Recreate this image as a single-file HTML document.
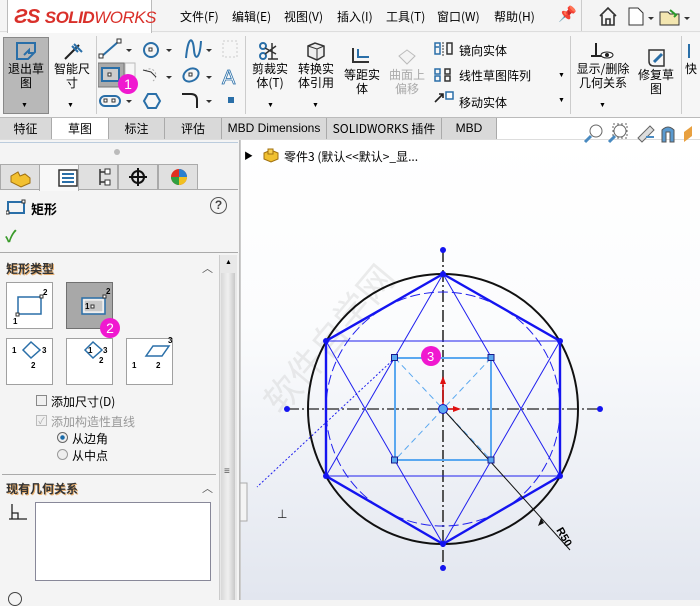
<!DOCTYPE html>
<html><head><meta charset="utf-8"><style>
*{margin:0;padding:0;box-sizing:border-box}
body{width:700px;height:600px;overflow:hidden;position:relative;background:#f4f4f4;font-family:"Liberation Sans","Noto Sans CJK SC",sans-serif;font-size:12px;color:#000}
.a{position:absolute;white-space:nowrap}
.cn{font-family:"Noto Sans CJK SC",sans-serif}
.tab{position:absolute;top:118px;height:21px;border-right:1px solid #aaa;background:#d9d9d9;text-align:center;line-height:21px;font-size:12px}
.btn{position:absolute;width:47px;height:47px;border:1px solid #a0a0a0;background:#fff}
.ptab{position:absolute;top:164px;width:40px;height:26px;border:1px solid #aaa;background:#e0e0e0}
.lbl{font-size:12px;line-height:14px;text-align:center}
</style></head><body>
<!-- menu bar -->
<div class="a" style="left:0;top:0;width:700px;height:32px;background:#f4f4f4;border-bottom:1px solid #ddd"></div>
<div class="a" style="left:7px;top:0;width:145px;height:34px;background:#fff;border:1px solid #bbb;border-top:none"></div>
<div class="a" style="left:14px;top:6px;font-size:20px;font-weight:bold;color:#d9302a;font-style:italic;letter-spacing:-0.5px">ƧS <span style="font-size:17px">SOLID</span><span style="font-size:17px;font-weight:normal">WORKS</span></div>
<div class="a cn" style="left:180px;top:8px;font-size:12px">文件(F)</div>
<div class="a cn" style="left:232px;top:8px;font-size:12px">编辑(E)</div>
<div class="a cn" style="left:284px;top:8px;font-size:12px">视图(V)</div>
<div class="a cn" style="left:337px;top:8px;font-size:12px">插入(I)</div>
<div class="a cn" style="left:386px;top:8px;font-size:12px">工具(T)</div>
<div class="a cn" style="left:437px;top:8px;font-size:12px">窗口(W)</div>
<div class="a cn" style="left:494px;top:8px;font-size:12px">帮助(H)</div>
<div class="a" style="left:558px;top:5px;font-size:15px;color:#2a7fc0">📌</div>
<div class="a" style="left:581px;top:0;width:1px;height:31px;background:#ccc"></div>
<svg class="a" style="left:596px;top:4px" width="104" height="24"><path d="M4 12 L12 4 L20 12 M6 11 V21 H18 V11 M10 21 V15 H14 V21" fill="none" stroke="#333" stroke-width="1.6"/><path d="M33 4 H42 L47 9 V21 H33Z" fill="#fff" stroke="#333"/><path d="M52 13 l3 3 l3-3z" fill="#333"/><path d="M64 8 H72 L74 10 H83 V21 H64Z" fill="#f3e6b0" stroke="#333"/><path d="M74 6 l6 5 l-2 2" fill="none" stroke="#2a9a2a" stroke-width="2"/><path d="M88 13 l3 3 l3-3z" fill="#333"/></svg>
<!-- ribbon -->
<div class="a" style="left:0;top:33px;width:700px;height:85px;background:#f6f6f6;border-bottom:1px solid #bbb"></div>
<div class="a" style="left:3px;top:37px;width:46px;height:77px;background:#b8b8b8;border:1px solid #888"></div>
<svg class="a" style="left:14px;top:40px" width="26" height="22"><path d="M3 3 H21 V12 L14 19 H3Z" fill="none" stroke="#2a6fa8" stroke-width="2"/><path d="M10 15 l5 -5 v3 h5" fill="none" stroke="#2a6fa8" stroke-width="2"/></svg>
<div class="a cn lbl" style="left:4px;top:62px;width:44px">退出草<br>图</div>
<div class="a" style="left:21px;top:102px;font-size:7px">▼</div>
<svg class="a" style="left:62px;top:42px" width="22" height="20"><path d="M3 17 L17 3" stroke="#222" stroke-width="2"/><path d="M10 4 l6 6 M12 2 l8 8" stroke="#2a6fa8" stroke-width="2"/></svg>
<div class="a cn lbl" style="left:50px;top:62px;width:44px">智能尺<br>寸</div>
<div class="a" style="left:67px;top:102px;font-size:7px">▼</div>
<div class="a" style="left:96px;top:36px;width:1px;height:78px;background:#ccc"></div>
<!-- sketch tools -->
<svg class="a" style="left:98px;top:36px" width="150" height="80">
<path d="M4 20 L20 6" stroke="#2a6fa8" stroke-width="2"/><rect x="1" y="18" width="4" height="4" fill="#fff" stroke="#333"/><rect x="19" y="3" width="4" height="4" fill="#fff" stroke="#333"/><path d="M28 13 l3 3 l3-3z" fill="#333"/>
<circle cx="53" cy="14" r="7" fill="none" stroke="#2a6fa8" stroke-width="2"/><rect x="51" y="12" width="3" height="3" fill="#fff" stroke="#333"/><path d="M68 13 l3 3 l3-3z" fill="#333"/>
<path d="M88 22 C90 0 95 0 96 14 C97 26 102 22 103 5" fill="none" stroke="#2a6fa8" stroke-width="2"/><path d="M108 13 l3 3 l3-3z" fill="#333"/>
<rect x="125" y="5" width="14" height="16" fill="none" stroke="#ccc" stroke-dasharray="2 2"/>
<rect x="0" y="27" width="26" height="24" fill="#aaa" stroke="#777"/><rect x="27" y="27" width="10" height="24" fill="#f6f6f6" stroke="#bbb"/><rect x="4" y="32" width="17" height="13" fill="#ccc" stroke="#2a6fa8" stroke-width="2"/><rect x="10" y="37" width="3" height="3" fill="#fff" stroke="#333"/>
<path d="M47 35 C55 28 62 40 55 45" fill="none" stroke="#aaa" stroke-dasharray="2 2"/><path d="M45 34 l8 2 l5 5" fill="none" stroke="#333"/><path d="M68 40 l3 3 l3-3z" fill="#333"/>
<ellipse cx="93" cy="39" rx="8" ry="6" transform="rotate(-30 93 39)" fill="none" stroke="#2a6fa8" stroke-width="2"/><rect x="91" y="37" width="3" height="3" fill="#fff" stroke="#333"/><path d="M108 40 l3 3 l3-3z" fill="#333"/>
<text x="124" y="48" font-size="20" fill="#fff" stroke="#2a6fa8" stroke-width="0.8" font-family="Liberation Sans">A</text>
<rect x="2" y="60" width="20" height="10" rx="5" fill="none" stroke="#2a6fa8" stroke-width="2"/><rect x="6" y="63" width="3" height="3" fill="#fff" stroke="#333"/><rect x="14" y="63" width="3" height="3" fill="#fff" stroke="#333"/><path d="M28 64 l3 3 l3-3z" fill="#333"/>
<path d="M46 65 l4-7 h8 l4 7 l-4 7 h-8z" fill="none" stroke="#2a6fa8" stroke-width="2"/>
<path d="M84 58 H93 Q99 58 99 64 V72" fill="none" stroke="#222" stroke-width="2"/><path d="M108 64 l3 3 l3-3z" fill="#333"/>
<rect x="130" y="61" width="6" height="6" fill="#2a6fa8"/>
</svg>
<div class="a" style="left:118px;top:74px;width:20px;height:20px;border-radius:50%;background:#f018d0;color:#fff;text-align:center;line-height:20px;font-size:14px">1</div>
<div class="a" style="left:245px;top:36px;width:1px;height:78px;background:#ccc"></div>
<svg class="a" style="left:258px;top:41px" width="24" height="20"><circle cx="5" cy="5" r="3" fill="none" stroke="#2a6fa8" stroke-width="2"/><circle cx="5" cy="15" r="3" fill="none" stroke="#2a6fa8" stroke-width="2"/><path d="M7 7 L18 13 M7 13 L18 5 M14 2 V18 M10 18 H20" stroke="#333" stroke-width="1.5"/></svg>
<div class="a cn lbl" style="left:250px;top:62px;width:40px">剪裁实<br>体(T)</div>
<div class="a" style="left:267px;top:102px;font-size:7px">▼</div>
<svg class="a" style="left:305px;top:41px" width="22" height="20"><path d="M3 5 L10 2 L19 5 V15 L12 19 L3 15Z" fill="#eee" stroke="#333" stroke-width="1.5"/><path d="M3 5 L12 8 L19 5 M12 8 V19" stroke="#333" fill="none"/></svg>
<div class="a cn lbl" style="left:296px;top:62px;width:40px">转换实<br>体引用</div>
<div class="a" style="left:312px;top:102px;font-size:7px">▼</div>
<svg class="a" style="left:351px;top:46px" width="22" height="20"><path d="M2 2 V16 H18" fill="none" stroke="#333" stroke-width="2"/><path d="M7 3 V11 H18" fill="none" stroke="#2a6fa8" stroke-width="2"/></svg>
<div class="a cn lbl" style="left:342px;top:68px;width:40px">等距实<br>体</div>
<svg class="a" style="left:395px;top:48px" width="22" height="18"><path d="M4 8 L12 2 L20 8 L12 16Z" fill="#f3f3f3" stroke="#bbb"/></svg>
<div class="a cn lbl" style="left:387px;top:68px;width:40px;color:#aaa">曲面上<br>偏移</div>
<svg class="a" style="left:433px;top:40px" width="22" height="68"><path d="M2 3 H7 V14 H2Z M2 7 H6" fill="none" stroke="#2a6fa8" stroke-width="1.5"/><path d="M14 3 H19 V14 H14Z" fill="none" stroke="#333" stroke-width="1.5"/><path d="M10 2 V16" stroke="#333" stroke-dasharray="2 1"/>
<path d="M2 29 H7 V34 H2Z M2 36 H7 V41 H2Z" fill="none" stroke="#2a6fa8" stroke-width="1.5"/><path d="M12 29 H17 V34 H12Z M12 36 H17 V41 H12Z" fill="none" stroke="#333" stroke-width="1.5"/>
<path d="M2 62 L10 54 M6 54 H10 V58" stroke="#222" stroke-width="1.6" fill="none"/><rect x="13" y="52" width="7" height="7" fill="#fff" stroke="#2a6fa8" stroke-width="1.5"/></svg>
<div class="a cn" style="left:459px;top:42px;font-size:12px">镜向实体</div>
<div class="a cn" style="left:459px;top:67px;font-size:12px">线性草图阵列</div>
<div class="a cn" style="left:459px;top:94px;font-size:12px">移动实体</div>
<div class="a" style="left:558px;top:72px;font-size:7px">▼</div>
<div class="a" style="left:558px;top:97px;font-size:7px">▼</div>
<div class="a" style="left:570px;top:36px;width:1px;height:78px;background:#ccc"></div>
<svg class="a" style="left:590px;top:41px" width="26" height="20"><path d="M6 2 V15 M1 15 H13" stroke="#222" stroke-width="2"/><ellipse cx="17" cy="14" rx="6" ry="3" fill="#fff" stroke="#222"/><circle cx="17" cy="14" r="2" fill="#222"/></svg>
<div class="a cn lbl" style="left:575px;top:62px;width:56px">显示/删除<br>几何关系</div>
<div class="a" style="left:599px;top:102px;font-size:7px">▼</div>
<svg class="a" style="left:646px;top:48px" width="22" height="20"><path d="M3 2 H18 V18 H8 Q3 18 3 13Z" fill="none" stroke="#333" stroke-width="1.5"/><path d="M8 14 L16 6" stroke="#2a6fa8" stroke-width="3"/></svg>
<div class="a cn lbl" style="left:636px;top:68px;width:40px">修复草<br>图</div>
<div class="a" style="left:681px;top:36px;width:1px;height:78px;background:#ccc"></div>
<div class="a" style="left:688px;top:44px;width:2px;height:14px;background:#2a6fa8"></div>
<div class="a cn lbl" style="left:685px;top:62px">快</div>
<!-- tabs -->
<div class="a" style="left:0;top:118px;width:700px;height:22px;background:#fff;border-bottom:1px solid #ddd"></div>
<div class="tab cn" style="left:0;width:52px">特征</div>
<div class="tab cn" style="left:52px;width:57px;background:#fff">草图</div>
<div class="tab cn" style="left:109px;width:56px">标注</div>
<div class="tab cn" style="left:165px;width:57px">评估</div>
<div class="tab" style="left:222px;width:105px">MBD Dimensions</div>
<div class="tab cn" style="left:327px;width:115px">SOLIDWORKS 插件</div>
<div class="tab" style="left:442px;width:55px">MBD</div>
<!-- canvas -->
<div class="a" style="left:240px;top:140px;width:460px;height:460px;background:linear-gradient(#fff 0%,#fbfcfd 40%,#e2e6ef 100%);border-left:1px solid #ccc"></div>
<svg class="a" style="left:580px;top:122px" width="120" height="24"><circle cx="16" cy="9" r="6" fill="#fff" stroke="#666"/><path d="M11 14 L5 20" stroke="#4a8ac0" stroke-width="3"/><circle cx="40" cy="9" r="6" fill="#fff" stroke="#666"/><rect x="33" y="2" width="14" height="14" fill="none" stroke="#666" stroke-dasharray="2 2"/><path d="M35 14 L29 20" stroke="#4a8ac0" stroke-width="3"/><path d="M58 16 L70 4 L74 8 L62 20Z" fill="#ddd" stroke="#666"/><path d="M66 15 H74" stroke="#4a8ac0" stroke-width="2"/><path d="M82 8 Q88 2 94 8 V20 H90 V10 H86 V20 H82Z" fill="#5a9ad0" stroke="#555"/><path d="M104 10 L112 4 V14 L104 20Z" fill="#e8a040"/></svg>
<div class="a" style="left:244px;top:149px;font-size:9px">▶</div>
<svg class="a" style="left:262px;top:146px" width="18" height="18"><path d="M2 7 L9 4 L16 7 V13 L9 16 L2 13Z" fill="#f0c030" stroke="#a07010"/><path d="M6 3 H11 V8 H6Z" fill="#f8d050" stroke="#a07010"/></svg>
<div class="a cn" style="left:284px;top:148px;font-size:12px">零件3 (默认&lt;&lt;默认&gt;_显...</div>
<div class="a cn" style="left:250px;font-size:36px;color:rgba(200,200,200,0.35);transform:rotate(-50deg);transform-origin:left top;top:390px">软件自学网</div>
<svg class="a" style="left:240px;top:140px" width="460" height="460">
<g transform="translate(-240,-140)">
<line x1="443" y1="250" x2="443" y2="568" stroke="#555" stroke-width="2" stroke-dasharray="12 3 2 3"/>
<line x1="287" y1="409" x2="600" y2="409" stroke="#222" stroke-width="1.2" stroke-dasharray="12 3 2 3"/>
<circle cx="443" cy="409" r="135" fill="none" stroke="#111" stroke-width="2"/>
<circle cx="443" cy="409" r="117" fill="none" stroke="#2020ee" stroke-width="1" stroke-dasharray="10 4"/>
<polygon points="443,274 560,341 560,476 443,544 326,476 326,341" fill="none" stroke="#1414f0" stroke-width="2.4"/>
<polygon points="443,274 560,476 326,476" fill="none" stroke="#2020ee" stroke-width="1"/>
<polygon points="443,544 560,341 326,341" fill="none" stroke="#2020ee" stroke-width="1"/>
<rect x="395" y="358" width="96" height="102" fill="none" stroke="#5aa8f0" stroke-width="2"/>
<line x1="395" y1="358" x2="491" y2="460" stroke="#5aa8f0" stroke-dasharray="6 4"/>
<line x1="491" y1="358" x2="395" y2="460" stroke="#5aa8f0" stroke-dasharray="6 4"/>
<line x1="395" y1="358" x2="257" y2="487" stroke="#2020ee" stroke-dasharray="2 2"/>
<line x1="443" y1="409" x2="570" y2="550" stroke="#111"/>
<path d="M541 518 l-3 8 l6 -3z" fill="#111"/>
<text x="0" y="0" font-size="11" font-weight="bold" font-family="Liberation Sans" transform="translate(556,530) rotate(60)">R50</text>
<line x1="443" y1="409" x2="443" y2="380" stroke="#e01010" stroke-width="1.5"/><path d="M440 384 L443 376 L446 384Z" fill="#e01010"/>
<line x1="443" y1="409" x2="456" y2="409" stroke="#e01010" stroke-width="1.5"/><path d="M453 406 L461 409 L453 412Z" fill="#e01010"/>
<circle cx="443" cy="409" r="4.5" fill="#5aa8f0" stroke="#1414c0"/>
<g fill="#5aa8f0" stroke="#1a1a8a"><rect x="391.5" y="354.5" width="6" height="6"/><rect x="488" y="354.5" width="6" height="6"/><rect x="391.5" y="457" width="6" height="6"/><rect x="488" y="457" width="6" height="6"/></g>
<g fill="#1414f0"><circle cx="443" cy="250" r="3"/><circle cx="443" cy="568" r="3"/><circle cx="287" cy="409" r="3"/><circle cx="600" cy="409" r="3"/><circle cx="443" cy="274" r="3"/><circle cx="443" cy="544" r="3"/><circle cx="560" cy="341" r="3"/><circle cx="560" cy="476" r="3"/><circle cx="326" cy="341" r="3"/><circle cx="326" cy="476" r="3"/></g>
<circle cx="431" cy="356" r="10" fill="#f018d0"/><text x="427" y="361" font-size="13" fill="#fff" font-family="Liberation Sans">3</text>
<rect x="240" y="483" width="7" height="38" fill="#f4f4f4" stroke="#aaa"/>
<text x="277" y="518" font-size="12" font-family="Liberation Sans" fill="#222">⊥</text>
</g></svg>
<!-- left panel -->
<div class="a" style="left:0;top:140px;width:240px;height:460px;background:#f4f4f4;border-right:1px solid #bbb"></div>
<div class="a" style="left:0;top:142px;width:238px;height:1px;background:#bcd"></div>
<div class="a" style="left:114px;top:149px;width:6px;height:6px;border-radius:50%;background:#bbb"></div>
<div class="a" style="left:0;top:189px;width:238px;height:1px;background:#aaa"></div>
<div class="ptab" style="left:0"></div><div class="ptab" style="left:39px;background:#f8f8f8;border-bottom:none;height:27px"></div><div class="ptab" style="left:78px"></div><div class="ptab" style="left:118px"></div><div class="ptab" style="left:158px"></div>
<svg class="a" style="left:8px;top:166px" width="190" height="22"><path d="M3 10 L10 6 L12 10 L17 8 L22 12 V17 L13 21 L3 16Z" fill="#f2c030" stroke="#a07010"/><rect x="51" y="4" width="18" height="16" fill="#fff" stroke="#333" stroke-width="1.5"/><path d="M54 8 H66 M54 12 H66 M54 16 H66" stroke="#2a6fa8" stroke-width="2"/><path d="M92 3 V19 M92 6 H98 M92 16 H98" stroke="#333" fill="none" stroke-width="1.5"/><rect x="97" y="3" width="5" height="5" fill="#fff" stroke="#333"/><rect x="97" y="14" width="5" height="5" fill="#fff" stroke="#333"/><circle cx="130" cy="11" r="6" fill="none" stroke="#111" stroke-width="2"/><path d="M130 2 V20 M121 11 H139" stroke="#111" stroke-width="2"/><circle cx="171" cy="11" r="8" fill="#e03020"/><path d="M171 11 L171 3 A8 8 0 0 1 179 11Z" fill="#2a80d0"/><path d="M171 11 L163 11 A8 8 0 0 0 171 19Z" fill="#30a040"/><path d="M171 11 L179 11 A8 8 0 0 1 171 19Z" fill="#f0c020"/></svg>
<svg class="a" style="left:6px;top:199px" width="20" height="16"><rect x="2" y="3" width="16" height="11" fill="none" stroke="#2a6fa8" stroke-width="2"/><rect x="0" y="12" width="3" height="3" fill="#fff" stroke="#333"/><rect x="16" y="1" width="3" height="3" fill="#fff" stroke="#333"/></svg>
<div class="a cn" style="left:31px;top:199px;font-size:13px;font-weight:bold">矩形</div>
<div class="a" style="left:210px;top:197px;width:17px;height:17px;border:1.5px solid #555;border-radius:50%;text-align:center;line-height:14px;font-size:12px;font-weight:bold;color:#444">?</div>
<div class="a" style="left:5px;top:223px;font-size:16px;color:#3a9a2a;font-weight:bold">✓</div>
<div class="a" style="left:0;top:252px;width:238px;height:1px;background:#aaa"></div>
<div class="a cn" style="left:6px;top:260px;font-size:12px;font-weight:bold;color:#333;text-shadow:1px 1px 0 #e8b070">矩形类型</div>
<div class="a" style="left:202px;top:260px;font-size:11px;color:#555">︿</div>
<div class="a" style="left:219px;top:255px;width:18px;height:345px;background:#e8e8e8;border-left:1px solid #ccc"></div>
<div class="a" style="left:221px;top:273px;width:14px;height:327px;background:linear-gradient(90deg,#d8d8d8,#f0f0f0,#c8c8c8)"></div>
<div class="a" style="left:225px;top:259px;font-size:7px">▲</div>
<div class="a" style="left:224px;top:466px;font-size:10px;color:#555">≡</div>
<div class="btn" style="left:6px;top:282px"></div>
<div class="btn" style="left:66px;top:282px;background:#a8a8a8;border-color:#707070"></div>
<div class="btn" style="left:6px;top:338px"></div><div class="btn" style="left:66px;top:338px"></div><div class="btn" style="left:126px;top:338px"></div>
<svg class="a" style="left:6px;top:282px" width="170" height="104" font-family="Liberation Sans" font-size="8" font-weight="bold">
<rect x="12" y="15" width="23" height="17" fill="none" stroke="#2a6fa8" stroke-width="1.5"/><rect x="10" y="31" width="3" height="3" fill="#fff" stroke="#333"/><rect x="34" y="13" width="3" height="3" fill="#fff" stroke="#333"/><text x="37" y="13">2</text><text x="7" y="42">1</text>
<rect x="76" y="16" width="23" height="16" fill="#ddd" stroke="#2a6fa8" stroke-width="1.5"/><rect x="78" y="18" width="19" height="12" fill="#c8c8c8" stroke="#fff"/><rect x="97" y="13" width="3" height="3" fill="#fff" stroke="#333"/><rect x="85" y="23" width="3" height="3" fill="#fff" stroke="#333"/><text x="79" y="27">1</text><text x="100" y="12">2</text>
<path d="M17 68 L25 60 L34 68 L25 76Z" fill="none" stroke="#2a6fa8" stroke-width="1.5"/><text x="6" y="71">1</text><text x="36" y="71">3</text><text x="25" y="86">2</text>
<path d="M79 68 L87 60 L96 68 L87 76Z" fill="none" stroke="#2a6fa8" stroke-width="1.5"/><text x="82" y="71">1</text><text x="97" y="71">3</text><text x="93" y="81">2</text>
<path d="M140 74 L147 64 L163 64 L156 74Z" fill="none" stroke="#2a6fa8" stroke-width="1.5"/><text x="126" y="86">1</text><text x="150" y="86">2</text><text x="162" y="61">3</text>
</svg>
<div class="a" style="left:100px;top:318px;width:20px;height:20px;border-radius:50%;background:#f018d0;color:#fff;text-align:center;line-height:20px;font-size:14px">2</div>
<div class="a" style="left:36px;top:395px;width:11px;height:11px;border:1px solid #888;background:#f0f0f0"></div>
<div class="a cn" style="left:51px;top:393px;font-size:12px">添加尺寸(D)</div>
<div class="a" style="left:36px;top:415px;width:11px;height:11px;border:1px solid #bbb;background:#f0f0f0;font-size:9px;line-height:10px;color:#aaa;text-align:center">✓</div>
<div class="a cn" style="left:51px;top:413px;font-size:12px;color:#999">添加构造性直线</div>
<div class="a" style="left:57px;top:432px;width:11px;height:11px;border:1px solid #666;border-radius:50%;background:radial-gradient(#1a6aa8 30%,#eee 40%)"></div>
<div class="a cn" style="left:72px;top:430px;font-size:12px">从边角</div>
<div class="a" style="left:57px;top:449px;width:11px;height:11px;border:1px solid #999;border-radius:50%;background:#eee"></div>
<div class="a cn" style="left:72px;top:447px;font-size:12px">从中点</div>
<div class="a" style="left:2px;top:474px;width:214px;height:1px;background:#aaa"></div>
<div class="a cn" style="left:6px;top:480px;font-size:12px;font-weight:bold;color:#333;text-shadow:1px 1px 0 #e8b070">现有几何关系</div>
<div class="a" style="left:202px;top:480px;font-size:11px;color:#555">︿</div>
<svg class="a" style="left:8px;top:502px" width="20" height="20"><path d="M4 2 V17 M1 17 H19 M4 11 H10 V17" fill="none" stroke="#222" stroke-width="1.3"/></svg>
<div class="a" style="left:35px;top:502px;width:176px;height:79px;background:#fff;border:1px solid #889"></div>
<div class="a" style="left:8px;top:592px;width:14px;height:14px;border:1px solid #444;border-radius:50%"></div>
</body></html>
